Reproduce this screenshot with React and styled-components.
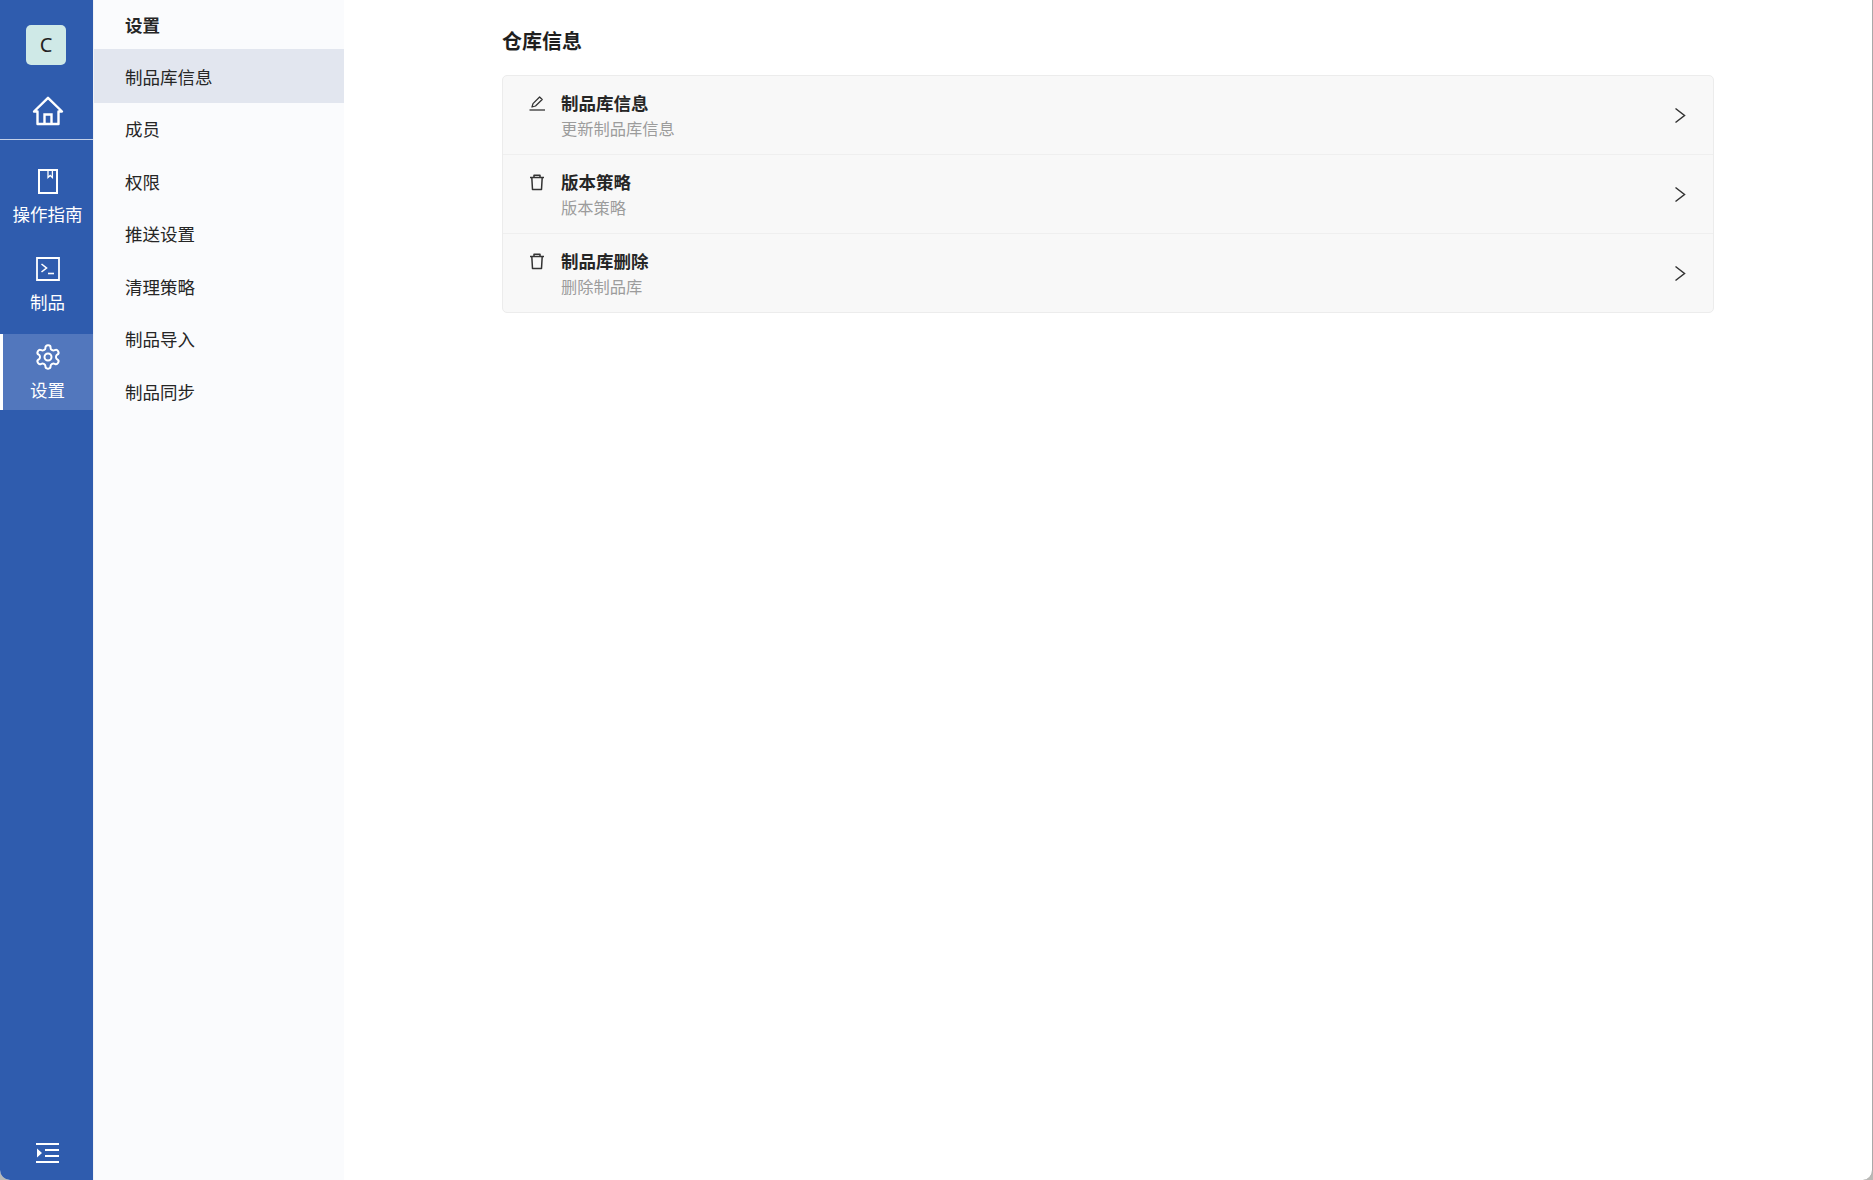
import React from "react";
import styled, { createGlobalStyle } from "styled-components";

const Global = createGlobalStyle`
  html, body { margin: 0; padding: 0; background: #b9b9b6; }
  * { box-sizing: border-box; }
  body { font-family: "Noto Sans CJK SC", "Noto Sans", sans-serif; }
`;

const Shell = styled.div`
  display: flex;
  width: 1873px;
  height: 1180px;
  background: #fff;
  overflow: hidden;
  border-right: 1px solid #a9a9a9;
  border-radius: 0 0 10px 10px;
`;
const Rail = styled.aside`
  flex: 0 0 93px;
  display: flex;
  flex-direction: column;
  background: #2f5cae;
  color: #fff;
`;
const RailTop = styled.div`
  height: 140px;
  padding-top: 25px;
  border-bottom: 1px solid #c3d0e8;
  display: flex;
  flex-direction: column;
`;
const Avatar = styled.div`
  width: 40px;
  height: 40px;
  margin-left: 26px;
  border-radius: 5px;
  background: #cfe9e7;
  color: #222;
  font-size: 20px;
  line-height: 40px;
  text-align: center;
  font-family: "Noto Sans", sans-serif;
`;
const HomeLink = styled.div`
  display: flex;
  justify-content: center;
  margin-top: 31px;
  padding-left: 2px;
`;
const RailNav = styled.nav`
  display: flex;
  flex-direction: column;
  gap: 12px;
  padding-top: 18px;
  flex: 1;
`;
const RailItem = styled.div`
  height: 76px;
  display: flex;
  flex-direction: column;
  align-items: center;
  padding-top: 11px;
  background: ${(p) => (p.$active ? "#5277bd" : "transparent")};
  border-left: 3px solid ${(p) => (p.$active ? "#fff" : "transparent")};
  padding-right: 1px;
`;
const RailIcon = styled.div`
  height: 24px;
  display: flex;
  align-items: center;
`;
const RailLabel = styled.div`
  margin-top: 8px;
  font-size: 17.5px;
  line-height: 26px;
  white-space: nowrap;
`;
const RailFoot = styled.div`
  display: flex;
  justify-content: center;
  padding: 0 0 17px 2px;
`;
const SubMenu = styled.aside`
  flex: 0 0 251px;
  background: #fafbfd;
  border-left: 1px solid #f0f2f6;
  display: flex;
  flex-direction: column;
`;
const SubTitle = styled.div`
  height: 49px;
  padding: 12px 0 0 31px;
  font-size: 17.5px;
  line-height: 26px;
  font-weight: 700;
  color: #262626;
`;
const SubItem = styled.div`
  height: 52.5px;
  padding: 2px 0 0 31px;
  display: flex;
  align-items: center;
  font-size: 17.5px;
  color: #262626;
  background: ${(p) => (p.$active ? "#e2e6ef" : "transparent")};
  box-shadow: ${(p) => (p.$active ? "0 1px 0 #e2e6ef" : "none")};
`;
const Main = styled.main`
  flex: 1;
  padding: 26px 158px 0 158px;
  min-width: 0;
`;
const Heading = styled.h1`
  margin: 0 0 20px;
  font-size: 20px;
  line-height: 29px;
  font-weight: 700;
  color: #1f1f1f;
`;
const Card = styled.div`
  background: #f8f8f8;
  border: 1px solid #ececec;
  border-radius: 5px;
  height: 238px;
  display: flex;
  flex-direction: column;
`;
const Row = styled.div`
  flex: 1;
  display: flex;
  align-items: flex-start;
  padding: 15px 27px 0 26px;
  border-top: ${(p) => (p.$first ? "none" : "1px solid #efefef")};
`;
const RowIcon = styled.div`
  width: 32px;
  height: 24px;
  display: flex;
  align-items: center;
  flex: none;
`;
const RowText = styled.div`
  flex: 1;
`;
const RowTitle = styled.div`
  font-size: 17.5px;
  line-height: 24px;
  font-weight: 700;
  color: #262626;
`;
const RowSub = styled.div`
  font-size: 16.25px;
  line-height: 24px;
  margin-top: 1px;
  color: #9c9c9c;
`;
const Arrow = styled.div`
  align-self: center;
  display: flex;
  margin-top: -15px;
`;

const HomeIcon = () => (
  <svg width="32" height="30" viewBox="0 0 32 30" fill="none" stroke="#fff" strokeWidth="2.4">
    <path d="M2 15.500 16 1.800l14 13.700h-3.500V28h-21V15.500Z" strokeLinejoin="round" />
    <path d="M12.500 28V18.500h7V28" />
  </svg>
);
const BookIcon = () => (
  <svg width="20" height="25" viewBox="0 0 20 25" fill="none" stroke="#fff" strokeWidth="2">
    <path d="M1 1h18v23H1z" />
    <path d="M10 1v7.500l2.200-2 2.200 2V1" strokeWidth="1.300" />
  </svg>
);
const TerminalIcon = () => (
  <svg width="24" height="24" viewBox="0 0 24 24" fill="none" stroke="#fff">
    <path d="M1 1h22v22H1z" strokeWidth="1.800" />
    <path d="m5.500 7 5 4-5 4" strokeWidth="1.600" />
    <path d="M12 16.500h6" strokeWidth="1.600" />
  </svg>
);
const GearIcon = () => (
  <svg width="28" height="28" viewBox="0 0 24 24" fill="none" stroke="#fff" strokeWidth="1.700" strokeLinecap="round" strokeLinejoin="round">
    <path d="M12.220 2h-.44a2 2 0 0 0-2 2v.18a2 2 0 0 1-1 1.730l-.43.25a2 2 0 0 1-2 0l-.15-.08a2 2 0 0 0-2.730.73l-.22.38a2 2 0 0 0 .73 2.730l.15.1a2 2 0 0 1 1 1.720v.51a2 2 0 0 1-1 1.740l-.15.09a2 2 0 0 0-.73 2.730l.22.38a2 2 0 0 0 2.730.73l.15-.08a2 2 0 0 1 2 0l.43.25a2 2 0 0 1 1 1.730V20a2 2 0 0 0 2 2h.44a2 2 0 0 0 2-2v-.18a2 2 0 0 1 1-1.730l.43-.25a2 2 0 0 1 2 0l.15.08a2 2 0 0 0 2.730-.73l.22-.39a2 2 0 0 0-.73-2.730l-.15-.08a2 2 0 0 1-1-1.740v-.5a2 2 0 0 1 1-1.740l.15-.09a2 2 0 0 0 .73-2.730l-.22-.38a2 2 0 0 0-2.730-.73l-.15.08a2 2 0 0 1-2 0l-.43-.25a2 2 0 0 1-1-1.730V4a2 2 0 0 0-2-2z" />
    <circle cx="12" cy="12" r="3" />
  </svg>
);
const OutdentIcon = () => (
  <svg width="24" height="20" viewBox="0 0 24 20" fill="#fff">
    <path d="M0 0h23v2H0zM0 18h23v2H0zM9 6h14v2H9zM9 12h14v2H9zM1 5.500 6 10l-5 4.500z" />
  </svg>
);
const PenIcon = () => (
  <svg width="16" height="16" viewBox="0 0 16 16" fill="none" stroke="#333" strokeWidth="1.300" strokeLinejoin="round">
    <path d="M3 12l1-3.400L10.600 2l2.600 2.500L6.500 11z" />
    <path d="M0.500 15h15.500" />
  </svg>
);
const TrashIcon = () => (
  <svg width="16" height="17" viewBox="0 0 16 17" fill="none" stroke="#333" strokeWidth="1.500">
    <path d="M1 3.500h14M5 3.500V1.200h6v2.300M2.800 3.500 3.500 15.500h9l.7-12" strokeLinejoin="round" />
  </svg>
);
const ChevronIcon = () => (
  <svg width="12" height="17" viewBox="0 0 12 17" fill="none" stroke="#333" strokeWidth="1.500">
    <path d="m1.500 1.500 9 7-9 7" />
  </svg>
);

const rows = [
  { icon: <PenIcon />, title: "制品库信息", sub: "更新制品库信息" },
  { icon: <TrashIcon />, title: "版本策略", sub: "版本策略" },
  { icon: <TrashIcon />, title: "制品库删除", sub: "删除制品库" },
];
const subItems = ["制品库信息", "成员", "权限", "推送设置", "清理策略", "制品导入", "制品同步"];

export default function App() {
  return (
    <>
      <Global />
      <Shell>
        <Rail>
          <RailTop>
            <Avatar>C</Avatar>
            <HomeLink><HomeIcon /></HomeLink>
          </RailTop>
          <RailNav>
            <RailItem>
              <RailIcon><BookIcon /></RailIcon>
              <RailLabel>操作指南</RailLabel>
            </RailItem>
            <RailItem>
              <RailIcon><TerminalIcon /></RailIcon>
              <RailLabel>制品</RailLabel>
            </RailItem>
            <RailItem $active>
              <RailIcon><GearIcon /></RailIcon>
              <RailLabel>设置</RailLabel>
            </RailItem>
          </RailNav>
          <RailFoot><OutdentIcon /></RailFoot>
        </Rail>
        <SubMenu>
          <SubTitle>设置</SubTitle>
          {subItems.map((s, i) => (
            <SubItem key={s} $active={i === 0}>{s}</SubItem>
          ))}
        </SubMenu>
        <Main>
          <Heading>仓库信息</Heading>
          <Card>
            {rows.map((r, i) => (
              <Row key={r.title} $first={i === 0}>
                <RowIcon>{r.icon}</RowIcon>
                <RowText>
                  <RowTitle>{r.title}</RowTitle>
                  <RowSub>{r.sub}</RowSub>
                </RowText>
                <Arrow><ChevronIcon /></Arrow>
              </Row>
            ))}
          </Card>
        </Main>
      </Shell>
    </>
  );
}
